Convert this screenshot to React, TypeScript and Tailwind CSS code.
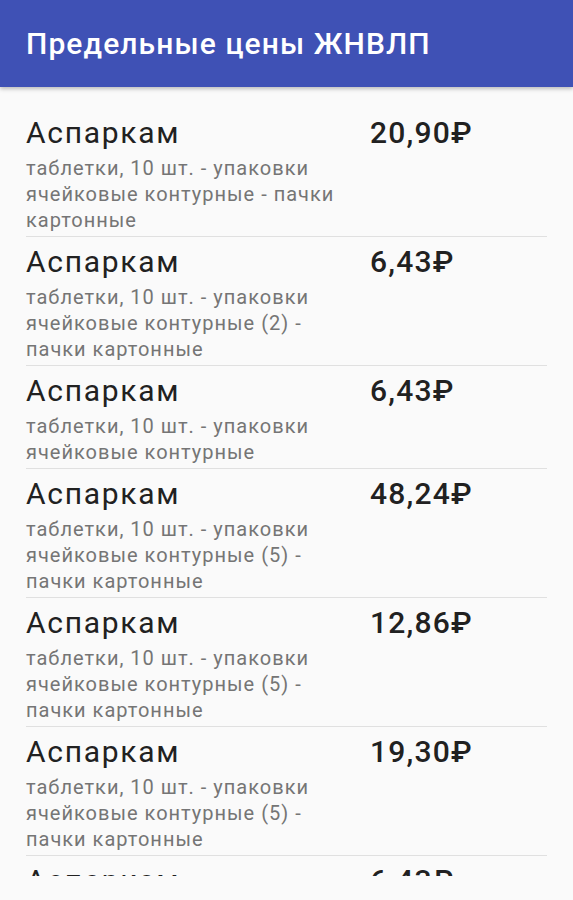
const items = [
  { name: 'Аспаркам', desc: 'таблетки, 10 шт. - упаковки ячейковые контурные - пачки картонные', price: '20,90₽' },
  { name: 'Аспаркам', desc: 'таблетки, 10 шт. - упаковки ячейковые контурные (2) - пачки картонные', price: '6,43₽' },
  { name: 'Аспаркам', desc: 'таблетки, 10 шт. - упаковки ячейковые контурные', price: '6,43₽' },
  { name: 'Аспаркам', desc: 'таблетки, 10 шт. - упаковки ячейковые контурные (5) - пачки картонные', price: '48,24₽' },
  { name: 'Аспаркам', desc: 'таблетки, 10 шт. - упаковки ячейковые контурные (5) - пачки картонные', price: '12,86₽' },
  { name: 'Аспаркам', desc: 'таблетки, 10 шт. - упаковки ячейковые контурные (5) - пачки картонные', price: '19,30₽' },
  { name: 'Аспаркам', desc: 'таблетки, 10 шт. - упаковки ячейковые контурные', price: '6,43₽' },
];

export default function App() {
  return (
    <div className="flex h-[900px] w-[573px] flex-col bg-[#fafafa] font-['Roboto','Liberation_Sans',sans-serif]">
      <header className="relative z-10 flex h-[87px] shrink-0 items-center bg-[#3f51b5] px-[26px] shadow-[0_2px_4px_rgba(0,0,0,0.25)]">
        <h1 className="text-[30px] font-medium leading-none tracking-[1.1px] text-white">Предельные цены ЖНВЛП</h1>
      </header>

      <div className="h-[789px] shrink-0 overflow-hidden pt-[21px]">
        {items.map((item, i) => (
          <div key={i} className={i === 0 ? 'mx-[26px]' : 'mx-[26px] border-t border-[#e0e0e0]'}>
            <div className="flex pb-[3px] pt-[7px]">
              <div className="w-[344px] shrink-0 pr-[6px]">
                <div className="text-[30px] leading-[35px] tracking-[1.7px] text-[#212121]">{item.name}</div>
                <div className="mt-[5px] text-[20px] leading-[26px] tracking-[1px] text-[#757575]">{item.desc}</div>
              </div>
              <div className="text-[30px] font-medium leading-[35px] tracking-[1.2px] text-[#212121]">{item.price}</div>
            </div>
          </div>
        ))}
      </div>
    </div>
  );
}
